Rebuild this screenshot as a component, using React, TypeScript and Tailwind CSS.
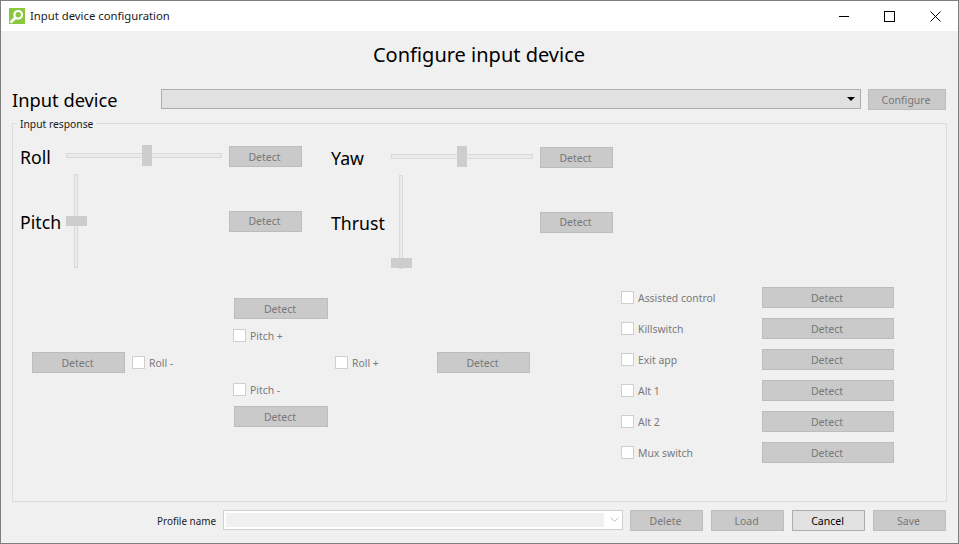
const detectClass =
  'flex items-center justify-center shrink-0 border border-[#bdbdbd] bg-[#cacaca] text-[10.5px] text-[#787878] h-[21px] pt-[2px] pr-[2px]';

function DisabledButton({ label, className = '' }: { label: string; className?: string }) {
  return <button className={`${detectClass} ${className}`}>{label}</button>;
}

function Check({ label }: { label: string }) {
  return (
    <label className="flex items-center gap-[4px] text-[10.4px] text-[#787878]">
      <span className="w-[13px] h-[13px] shrink-0 border border-[#cfcfcf] bg-white" />
      <span className="h-[13px] leading-[15px]">{label}</span>
    </label>
  );
}

function AxisLabel({ label, width }: { label: string; width: string }) {
  return <span className={`${width} h-[21px] text-[17.7px] leading-[23px]`}>{label}</span>;
}

function HSlider({ width, thumb }: { width: string; thumb: string }) {
  return (
    <div className={`relative h-[21px] ${width}`}>
      <div className="absolute left-0 right-0 top-[7px] h-[5px] border border-[#d8dad8] bg-[#ebebeb]" />
      <div className={`absolute top-[-1px] w-[10px] h-[21px] bg-[#cdcdcd] ${thumb}`} />
    </div>
  );
}

function VSlider({ thumb }: { thumb: string }) {
  return (
    <div className="relative w-[21px] h-[94px]">
      <div className="absolute top-0 bottom-0 left-[8px] w-[4px] border border-[#d8dad8] bg-[#ebebeb]" />
      <div className={`absolute left-0 w-[21px] h-[10px] bg-[#cdcdcd] ${thumb}`} />
    </div>
  );
}

const rightRows = ['Assisted control', 'Killswitch', 'Exit app', 'Alt 1', 'Alt 2', 'Mux switch'];

export default function App() {
  return (
    <div
      className="w-[959px] h-[544px] flex flex-col border border-[#7f7f7f] bg-[#f0f0f0] overflow-hidden text-black"
      style={{ fontFamily: '"Noto Sans", "Open Sans", sans-serif' }}
    >
      {/* title bar */}
      <div className="h-[30px] shrink-0 bg-white flex items-center pl-[8px]">
        <svg width="16" height="16" viewBox="0 0 16 16" className="shrink-0">
          <rect width="16" height="16" fill="#8cc63f" />
          <circle cx="9.2" cy="6.8" r="3.8" fill="none" stroke="#fff" strokeWidth="2.2" />
          <path d="M6.2 10 L1.5 14.5" stroke="#fff" strokeWidth="2.6" />
        </svg>
        <span className="ml-[5px] text-[11.3px] text-[#1a1a1a]">Input device configuration</span>
        <div className="ml-auto flex h-full">
          <div className="w-[46px] flex items-center justify-center pl-px">
            <div className="w-[10px] h-px bg-black" />
          </div>
          <div className="w-[46px] flex items-center justify-center">
            <div className="w-[11px] h-[11px] border border-black" />
          </div>
          <div className="w-[46px] flex items-center justify-center">
            <svg width="11" height="11" viewBox="0 0 11 11">
              <path d="M0.5 0.5 L10.5 10.5 M10.5 0.5 L0.5 10.5" stroke="#000" strokeWidth="1" />
            </svg>
          </div>
        </div>
      </div>

      {/* content */}
      <div className="flex-1 flex flex-col pl-[11px] pr-[11px]">
        <h1 className="mt-[9px] h-[30px] text-center text-[20px] leading-[30px] pr-px">Configure input device</h1>

        <div className="mt-[19px] flex items-start">
          <span className="w-[149px] text-[18.3px] leading-[20px] pt-px">Input device</span>
          <div className="w-[700px] h-[20px] border border-[#adadad] bg-[#e1e1e1] flex items-center justify-end pr-[5px]">
            <svg width="8" height="4" viewBox="0 0 8 4">
              <path d="M0 0 H8 L4 4 Z" fill="#000" />
            </svg>
          </div>
          <DisabledButton label="Configure" className="ml-[7px] w-[78px]" />
        </div>

        {/* input response group */}
        <div className="relative mt-[13px] w-[935px] h-[379px] border border-[#dcdcdc] pl-[7px] pt-[22px] flex flex-col">
          <span className="absolute left-[4px] top-[-7px] bg-[#f0f0f0] px-[3px] text-[10.3px] leading-[14px] text-[#1a1a1a]">
            Input response
          </span>

          <div className="flex items-start">
            {/* roll / pitch */}
            <div className="flex flex-col">
              <div className="flex items-center">
                <AxisLabel label="Roll" width="w-[46px]" />
                <HSlider width="w-[156px]" thumb="left-[76px]" />
                <DisabledButton label="Detect" className="ml-[7px] w-[73px]" />
              </div>
              <div className="mt-[7px] flex items-center h-[94px]">
                <AxisLabel label="Pitch" width="w-[46px]" />
                <div className="w-[156px]">
                  <VSlider thumb="top-[42px]" />
                </div>
                <DisabledButton label="Detect" className="ml-[7px] w-[73px]" />
              </div>
            </div>

            {/* yaw / thrust */}
            <div className="ml-[29px] mt-px flex flex-col">
              <div className="flex items-center">
                <AxisLabel label="Yaw" width="w-[60px]" />
                <HSlider width="w-[142px]" thumb="left-[66px]" />
                <DisabledButton label="Detect" className="ml-[7px] w-[73px]" />
              </div>
              <div className="mt-[7px] flex items-center h-[94px]">
                <AxisLabel label="Thrust" width="w-[60px]" />
                <div className="w-[142px]">
                  <VSlider thumb="top-[83px]" />
                </div>
                <DisabledButton label="Detect" className="ml-[7px] w-[73px]" />
              </div>
            </div>
          </div>

          <div className="mt-[18px] flex items-start">
            {/* direction pad */}
            <div className="ml-[12px] mt-[11px] w-[498px] flex items-center">
              <div className="w-[201px] flex items-center">
                <DisabledButton label="Detect" className="w-[93px]" />
                <div className="ml-[7px]">
                  <Check label="Roll -" />
                </div>
              </div>
              <div className="w-[102px] flex flex-col">
                <DisabledButton label="Detect" className="ml-px w-[94px]" />
                <div className="mt-[10px]">
                  <Check label="Pitch +" />
                </div>
                <div className="mt-[41px]">
                  <Check label="Pitch -" />
                </div>
                <DisabledButton label="Detect" className="ml-px w-[94px] mt-[10px]" />
              </div>
              <div className="w-[102px]">
                <Check label="Roll +" />
              </div>
              <DisabledButton label="Detect" className="w-[93px]" />
            </div>

            {/* switches */}
            <div className="ml-[91px] flex flex-col gap-[10px]">
              {rightRows.map((row) => (
                <div key={row} className="flex items-center w-[273px] justify-between">
                  <Check label={row} />
                  <DisabledButton label="Detect" className="w-[132px]" />
                </div>
              ))}
            </div>
          </div>
        </div>

        {/* bottom row */}
        <div className="mt-[8px] flex items-start justify-end w-[934px]">
          <span className="text-[9.9px] leading-[23px] h-[21px] text-[#1a1a1a]">Profile name</span>
          <div className="ml-[7px] w-[400px] h-[20px] border border-[#d0d0d0] bg-white flex items-center pl-[2px] pr-[2px]">
            <div className="w-[378px] h-[14px] bg-[#f0f0f0]" />
            <svg width="9" height="6" viewBox="0 0 9 6" className="ml-[6px]">
              <path d="M0.5 0.5 L4.5 4.5 L8.5 0.5" fill="none" stroke="#bfbfbf" />
            </svg>
          </div>
          <DisabledButton label="Delete" className="ml-[7px] w-[73px]" />
          <DisabledButton label="Load" className="ml-[8px] w-[73px]" />
          <button className="ml-[8px] w-[73px] h-[21px] border border-[#adadad] bg-[#e1e1e1] text-[10.5px] pt-[2px] pr-[2px] flex items-center justify-center">
            Cancel
          </button>
          <DisabledButton label="Save" className="ml-[8px] w-[73px]" />
        </div>
      </div>
    </div>
  );
}
